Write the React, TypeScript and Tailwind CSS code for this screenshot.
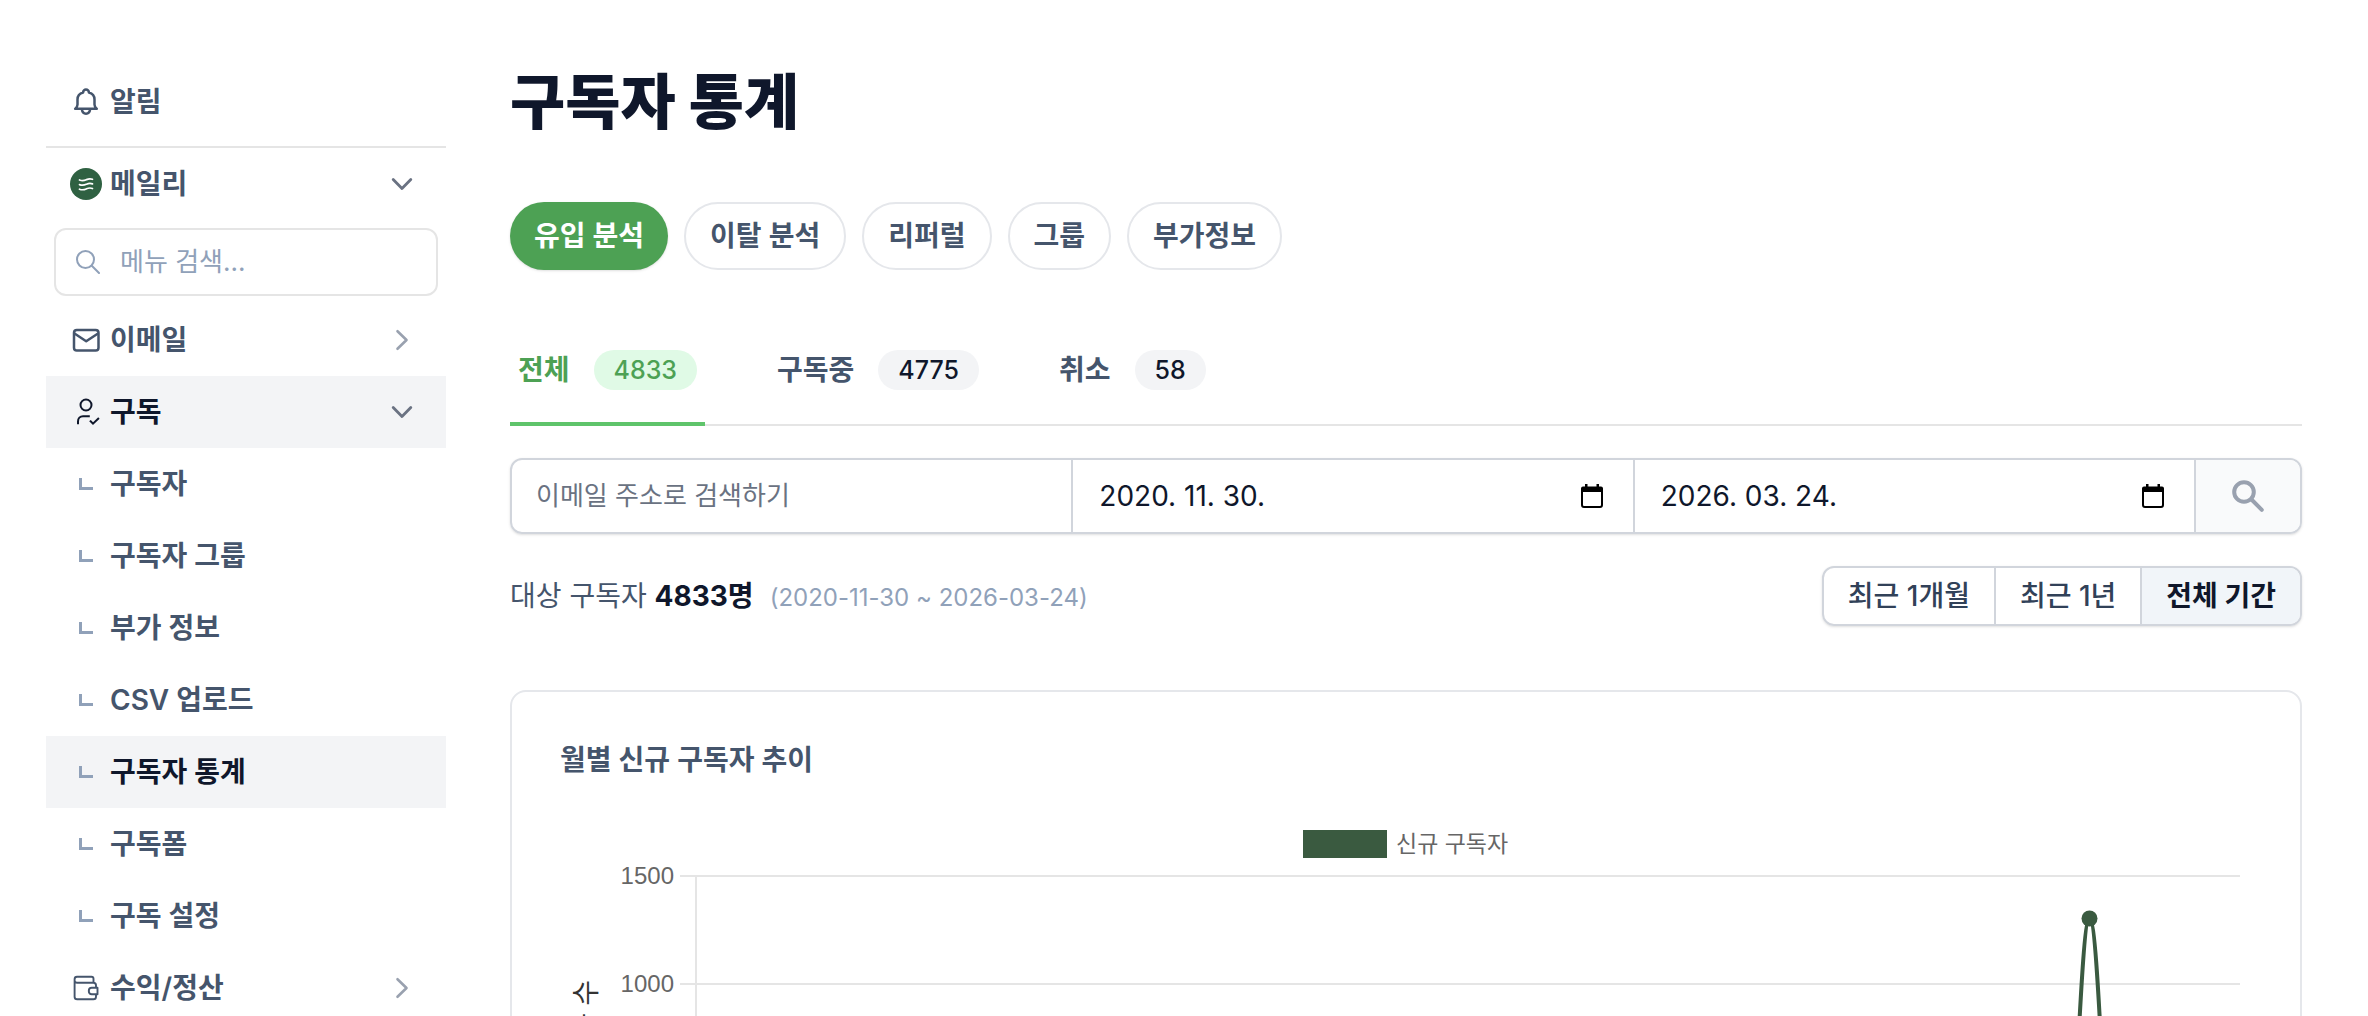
import React, { useState } from "react";

interface NavRowProps {
  label: string;
  icon: React.ReactNode;
  active?: boolean;
  chevron?: "down" | "right";
}

const ChevronDown = () => (
  <svg className="mr-1.5 size-7 text-gray-500" viewBox="0 0 28 28" fill="none" stroke="currentColor" strokeWidth="2.8" strokeLinecap="round" strokeLinejoin="round">
    <path d="M5.2 9.5 14 18.5l8.8-9" />
  </svg>
);

const ChevronRight = () => (
  <svg className="mr-1.5 size-7 text-gray-400" viewBox="0 0 28 28" fill="none" stroke="currentColor" strokeWidth="2.6" strokeLinecap="round" strokeLinejoin="round">
    <path d="M9.5 5.2 18.5 14l-9 8.8" />
  </svg>
);

const BellIcon = () => (
  <svg className="size-8" viewBox="0 0 32 32" fill="none" stroke="currentColor" strokeWidth="2.5" strokeLinecap="round" strokeLinejoin="round">
    <path d="M5.2 22.8h21.6c-1.5-1-2.3-2.4-2.3-4.2v-5c0-3.6-2.2-6.2-5.6-7.1a2.9 2.9 0 0 0-5.8 0c-3.4.9-5.6 3.5-5.6 7.1v5c0 1.8-.8 3.2-2.3 4.2Z" />
    <path d="M11.8 23.2c.4 2.9 2 4.5 4.2 4.5s3.8-1.6 4.2-4.5" />
  </svg>
);

const LogoIcon = () => (
  <svg className="size-8" viewBox="0 0 32 32" fill="none">
    <circle cx="16" cy="16" r="16" fill="#2f6142" />
    <path
      d="M9.5 12c3.5 1.3 5 .5 7-.4 2-.9 4-1.1 6-.3M9.5 16.6c3.5 1.3 5 .5 7-.4 2-.9 4-1.1 6-.3M9.5 21.2c3.5 1.3 5 .5 7-.4 2-.9 4-1.1 6-.3"
      stroke="#fff"
      strokeWidth="1.7"
      strokeLinecap="round"
    />
  </svg>
);

const MailIcon = () => (
  <svg className="size-8" viewBox="0 0 32 32" fill="none" stroke="currentColor" strokeWidth="2.5" strokeLinejoin="round">
    <rect x="4" y="6" width="24.5" height="20.5" rx="2.8" />
    <path d="m4.5 9.5 11.7 7.8L28 9.5" />
  </svg>
);

const UserCheckIcon = () => (
  <svg className="size-8" viewBox="0 0 32 32" fill="none" stroke="currentColor" strokeWidth="2" strokeLinecap="square">
    <circle cx="16" cy="9" r="5.5" />
    <path d="M8 27.2v-1.7c0-3 2-5.2 5-5.2h5.8" />
    <path d="m20.6 25.3 2.4 2.4 5.2-5" />
  </svg>
);

const WalletIcon = () => (
  <svg className="size-8" viewBox="0 0 32 32" fill="none" stroke="currentColor" strokeWidth="1.9" strokeLinejoin="round">
    <path d="M23.5 10.5V6.8c0-1.2-.8-2-2-2H7c-1.4 0-2.4 1-2.4 2.5v17.4c0 1.6 1 2.6 2.6 2.6h16.2c1.6 0 2.6-1 2.6-2.6v-2.5M26 15.8v-2.5c0-1.6-1-2.6-2.6-2.6H7.2c-1.6 0-2.6-1-2.6-2.3" />
    <path d="M27.5 15.8h-5.8c-1.8 0-2.9 1.3-2.9 3.2s1.1 3.2 2.9 3.2h5.8Z" />
  </svg>
);

const CalendarIcon = () => (
  <svg className="h-6 w-[22px]" viewBox="0 0 22 24" fill="none">
    <path d="M1 5.5h20V21a2 2 0 0 1-2 2H3a2 2 0 0 1-2-2Z" stroke="#000" strokeWidth="2" />
    <path d="M0 4.5a2 2 0 0 1 2-2h2V0h2.5v2.5h9V0H18v2.5h2a2 2 0 0 1 2 2V8H0Z" fill="#000" />
  </svg>
);

const NavRow: React.FC<NavRowProps> = ({ label, icon, active, chevron }) => (
  <a
    href="#"
    className={`flex h-[72px] items-center gap-2 px-6 font-semibold ${
      active ? "bg-gray-100 text-slate-900" : "text-slate-600"
    }`}
  >
    <span className="flex size-8 items-center justify-center">{icon}</span>
    <span className="flex-1">{label}</span>
    {chevron === "down" && <ChevronDown />}
    {chevron === "right" && <ChevronRight />}
  </a>
);

const Corner = () => <span className="h-3 w-3.5 border-b-[3px] border-l-[3px] border-slate-400" />;

const subMenus = ["구독자", "구독자 그룹", "부가 정보", "CSV 업로드", "구독자 통계", "구독폼", "구독 설정"];

const Sidebar = () => (
  <nav className="w-[400px] shrink-0">
    <NavRow label="알림" icon={<BellIcon />} />
    <div className="mt-2 border-t-2 border-neutral-200" />
    <NavRow label="메일리" icon={<LogoIcon />} chevron="down" />
    <label className="m-2 flex h-[68px] items-center gap-5 rounded-xl border-2 border-neutral-200 px-5">
      <svg className="size-6 text-slate-400" viewBox="0 0 24 24" fill="none" stroke="currentColor" strokeWidth="2" strokeLinecap="round">
        <circle cx="9.5" cy="9.5" r="8.5" />
        <path d="m15.8 15.8 7.2 7.2" />
      </svg>
      <input
        className="w-full min-w-0 flex-1 text-[26px] outline-none placeholder:text-slate-400"
        placeholder="메뉴 검색..."
        aria-label="메뉴 검색"
        type="text"
      />
    </label>
    <NavRow label="이메일" icon={<MailIcon />} chevron="right" />
    <NavRow label="구독" icon={<UserCheckIcon />} chevron="down" active />
    {subMenus.map((menu) => (
      <NavRow key={menu} label={menu} icon={<Corner />} active={menu === "구독자 통계"} />
    ))}
    <NavRow label="수익/정산" icon={<WalletIcon />} chevron="right" />
  </nav>
);

const pills = ["유입 분석", "이탈 분석", "리퍼럴", "그룹", "부가정보"];

const tabs = [
  { name: "전체", count: 4833 },
  { name: "구독중", count: 4775 },
  { name: "취소", count: 58 },
];

const periods = ["최근 1개월", "최근 1년", "전체 기간"];

interface DateFieldProps {
  label: string;
  value: string;
  onChange: (arg: string) => void;
}

const DateField: React.FC<DateFieldProps> = ({ label, value, onChange }) => (
  <div className="flex min-w-0 items-center border-r-2 border-gray-300 pr-[30px] pl-[26px]">
    <input
      className="min-w-0 flex-1 text-slate-900 outline-none"
      type="text"
      aria-label={label}
      value={value}
      onChange={(e) => onChange(e.target.value)}
    />
    <button type="button" aria-label={`${label} 선택`}>
      <CalendarIcon />
    </button>
  </div>
);

const gridLines = [
  { value: 1500, y: 64 },
  { value: 1000, y: 172 },
  { value: 500, y: 280 },
  { value: 0, y: 388 },
];

const Chart = () => (
  <svg className="mt-8 w-full" viewBox="0 0 1692 440" role="img" aria-label="월별 신규 구독자 추이">
    <rect x="743" y="18" width="84" height="28" fill="#3a5a40" />
    <text x="836" y="40" fontSize="23" fill="#666" className="font-['Liberation_Sans','Noto_Sans_CJK_KR',sans-serif]">
      신규 구독자
    </text>
    {gridLines.map((line) => (
      <g key={line.value}>
        <path d={`M120 ${line.y}H1680`} stroke="#e5e5e5" strokeWidth="2" />
        <text x="114" y={line.y + 8} fontSize="24" textAnchor="end" fill="#666" className="font-['Liberation_Sans',sans-serif]">
          {line.value}
        </text>
      </g>
    ))}
    <path d="M136 64V404" stroke="#e5e5e5" strokeWidth="2" />
    <text
      transform="translate(36 168) rotate(-90)"
      fontSize="28"
      textAnchor="end"
      fill="#333"
      className="font-['Liberation_Sans','Noto_Sans_CJK_KR',sans-serif]"
    >
      구독자 수
    </text>
    <path
      d="M136 378C420 366 760 384 1100 374S1460 378 1505 386C1515 386 1520 106.5 1529.5 106.5C1539.5 106.5 1544.5 386 1554 386C1590 380 1640 376 1680 380"
      fill="none"
      stroke="#3a5a40"
      strokeWidth="4"
    />
    <circle cx="1529.5" cy="106.5" r="8" fill="#3a5a40" />
  </svg>
);

const App: React.FC = () => {
  const [pill, setPill] = useState<string>("유입 분석");
  const [tab, setTab] = useState<string>("전체");
  const [period, setPeriod] = useState<string>("전체 기간");
  const [from, setFrom] = useState<string>("2020. 11. 30.");
  const [to, setTo] = useState<string>("2026. 03. 24.");

  return (
    <div className="flex h-screen gap-16 overflow-x-hidden overflow-y-auto bg-white pt-[66px] pr-[66px] pl-[46px] font-['Inter','Noto_Sans_CJK_KR',sans-serif] text-[28px] leading-10 [scrollbar-width:none]">
      <Sidebar />
      <main className="min-w-0 flex-1">
        <h1 className="text-[60px] leading-[72px] font-extrabold text-slate-900">구독자 통계</h1>

        <div className="mt-16 flex gap-4">
          {pills.map((name) => (
            <button
              key={name}
              onClick={() => setPill(name)}
              className={`h-[68px] rounded-full px-6 font-semibold ${
                pill === name ? "bg-[#4da154] text-white shadow-sm" : "border-2 border-gray-200 text-slate-600"
              }`}
            >
              {name}
            </button>
          ))}
        </div>

        <div className="mt-12 flex gap-16 border-b-2 border-neutral-200">
          {tabs.map(({ name, count }) => (
            <button
              key={name}
              onClick={() => setTab(name)}
              className={`-mb-0.5 flex items-center gap-6 border-b-4 px-2 py-8 font-semibold ${
                tab === name ? "border-[#5fc46b] text-[#4da154]" : "border-transparent text-slate-600"
              }`}
            >
              {name}
              <span
                className={`h-10 rounded-full px-5 text-[25px] leading-10 font-medium ${
                  tab === name ? "bg-[#e0fae6]" : "bg-gray-100 text-slate-900"
                }`}
              >
                {count}
              </span>
            </button>
          ))}
        </div>

        <form className="mt-8 grid h-[76px] grid-cols-[1fr_1fr_1fr_104px] overflow-hidden rounded-xl border-2 border-gray-300 shadow-sm">
          <input
            className="min-w-0 border-r-2 border-gray-300 px-6 text-[26px] outline-none placeholder:text-gray-500"
            placeholder="이메일 주소로 검색하기"
            aria-label="이메일 주소"
            type="text"
          />
          <DateField label="시작일" value={from} onChange={setFrom} />
          <DateField label="종료일" value={to} onChange={setTo} />
          <button type="button" aria-label="검색" className="flex items-center justify-center bg-gray-50 text-gray-400">
            <svg className="size-8" viewBox="0 0 32 32" fill="none" stroke="currentColor" strokeWidth="4" strokeLinecap="round">
              <circle cx="12" cy="12" r="9.8" />
              <path d="m19.5 19.5 10.3 10.3" />
            </svg>
          </button>
        </form>

        <div className="mt-8 flex items-center justify-between">
          <p className="text-slate-600">
            대상 구독자 <strong className="font-bold text-slate-900">4833명</strong>
            <span className="ml-4 text-2xl text-slate-400">(2020-11-30 ~ 2026-03-24)</span>
          </p>
          <div className="flex h-[60px] divide-x-2 divide-gray-300 overflow-hidden rounded-xl border-2 border-gray-300 shadow-sm">
            {periods.map((name) => (
              <button
                key={name}
                onClick={() => setPeriod(name)}
                className={`px-6 ${
                  period === name ? "bg-slate-100 font-bold text-slate-900" : "font-medium text-slate-700"
                }`}
              >
                {name}
              </button>
            ))}
          </div>
        </div>

        <section className="mt-16 rounded-2xl border-2 border-gray-200 p-12">
          <h2 className="font-semibold text-slate-600">월별 신규 구독자 추이</h2>
          <Chart />
        </section>
      </main>
    </div>
  );
};

export default App;
